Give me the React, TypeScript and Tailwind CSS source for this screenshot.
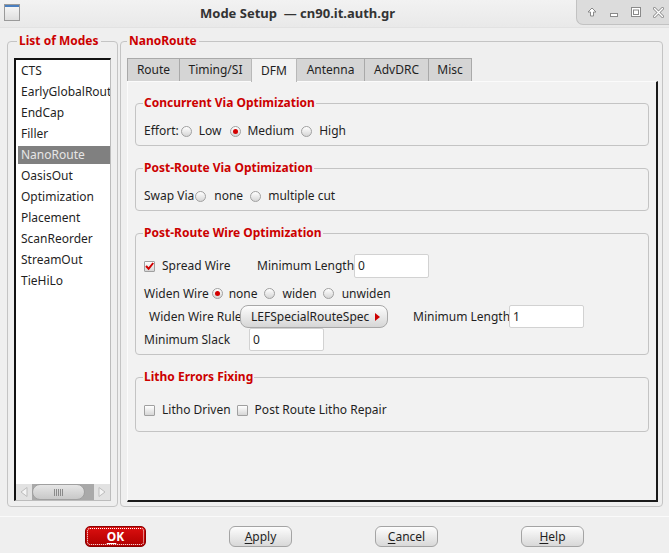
import React from "react";

const Radio = ({ checked, className = "" }: { checked?: boolean; className?: string }) => (
  <span
    className={
      "inline-flex w-[11px] h-[11px] shrink-0 items-center justify-center rounded-full border border-[#a0a0a0] bg-linear-to-b from-[#ffffff] to-[#d6d6d6] " +
      className
    }
  >
    {checked && <span className="w-[5px] h-[5px] rounded-full bg-[#d40000]" />}
  </span>
);

const Check = ({ checked, className = "" }: { checked?: boolean; className?: string }) => (
  <span
    className={
      "inline-flex w-[11px] h-[11px] shrink-0 items-center justify-center rounded-[1px] border border-[#a0a0a0] bg-linear-to-b from-[#ffffff] to-[#d6d6d6] " +
      className
    }
  >
    {checked && (
      <svg width="11" height="11" viewBox="0 0 11 11" className="shrink-0">
        <path d="M2 5 L4.6 7.8 L9.2 2" fill="none" stroke="#d00000" strokeWidth="2" />
      </svg>
    )}
  </span>
);

const Input = ({ value, w, h }: { value: string; w: string; h: string }) => (
  <div
    className={
      "flex items-center shrink-0 bg-white border border-[#d2d2d2] rounded-[2px] pl-[3px] text-[#1f1f1f] " + w + " " + h
    }
  >
    {value}
  </div>
);

const Group = ({
  title,
  className = "",
  children,
}: {
  title: string;
  className?: string;
  children: React.ReactNode;
}) => (
  <fieldset className={"border border-[#c4c4c4] rounded-[4px] pl-[8px] pr-[8px] " + className}>
    <legend className="px-[1px] ml-[-1px] text-[#cc0000] font-bold leading-[16px]">{title}</legend>
    {children}
  </fieldset>
);

const Btn = ({ children, ok }: { children: React.ReactNode; ok?: boolean }) =>
  ok ? (
    <div className="w-[61px] h-[21px] flex items-center justify-center rounded-[5px] border border-[#8a0000] bg-linear-to-b from-[#dc1010] to-[#b00000] text-white font-bold outline-1 outline-dotted outline-white outline-offset-[-3px]">
      {children}
    </div>
  ) : (
    <div className="w-[63px] h-[21px] flex items-center justify-center rounded-[6px] border border-[#a4a4a4] bg-linear-to-b from-[#fdfdfd] to-[#d8d8d8] text-[#1f1f1f]">
      {children}
    </div>
  );

const modes = [
  "CTS",
  "EarlyGlobalRoute",
  "EndCap",
  "Filler",
  "NanoRoute",
  "OasisOut",
  "Optimization",
  "Placement",
  "ScanReorder",
  "StreamOut",
  "TieHiLo",
];

const tabs: [string, string][] = [
  ["Route", "w-[53px]"],
  ["Timing/SI", "w-[73px]"],
  ["DFM", "w-[46px]"],
  ["Antenna", "w-[69px]"],
  ["AdvDRC", "w-[65px]"],
  ["Misc", "w-[44px]"],
];

export default function App() {
  return (
    <div className="w-[669px] h-[553px] overflow-hidden bg-[#efefef] text-[12px] leading-[16px] text-[#1f1f1f] font-['Noto_Sans','Open_Sans','DejaVu_Sans',sans-serif] flex flex-col">
      {/* Title bar */}
      <div className="h-[28px] shrink-0 flex items-start bg-linear-to-b from-[#f2f2f2] to-[#e9e9e9] border-b border-[#e2e2e2]">
        <div className="mt-[4px] ml-[4px] w-[16px] h-[17px] border border-[#9a9a9a] bg-linear-to-b from-[#f8f8f8] to-[#dedede] flex flex-col">
          <div className="h-[2px] bg-[#4a7fc0]" />
        </div>
        <div className="ml-[180px] mt-[5px] font-bold text-[13px] leading-[17px] text-[#333333] whitespace-pre">
          Mode Setup  — cn90.it.auth.gr
        </div>
        <div className="ml-auto h-[25px] w-[93px] bg-[#dcdcdc] border-l border-b border-[#c2c2c2] rounded-bl-[7px] flex items-center gap-[12px] pl-[10px]">
          <svg width="10" height="10" viewBox="0 0 10 10">
            <path d="M5 1 L9 5 L6.5 5 L6.5 9 L3.5 9 L3.5 5 L1 5 Z" fill="#ffffff" stroke="#8a8a8a" strokeWidth="1" />
          </svg>
          <svg width="10" height="10" viewBox="0 0 10 10">
            <rect x="1.5" y="6.5" width="7" height="3" fill="#ffffff" stroke="#8a8a8a" />
          </svg>
          <svg width="10" height="10" viewBox="0 0 10 10">
            <rect x="0.5" y="0.5" width="9" height="9" fill="#ffffff" stroke="#8a8a8a" />
            <rect x="2.5" y="3" width="5" height="4.5" fill="none" stroke="#8a8a8a" />
          </svg>
          <svg width="11" height="11" viewBox="0 0 11 11">
            <path d="M1.5 1.5 L9.5 9.5 M9.5 1.5 L1.5 9.5" stroke="#8a8a8a" strokeWidth="3" strokeLinecap="round" />
            <path d="M1.5 1.5 L9.5 9.5 M9.5 1.5 L1.5 9.5" stroke="#ffffff" strokeWidth="1.4" strokeLinecap="round" />
          </svg>
        </div>
      </div>

      {/* Main area */}
      <div className="h-[488px] shrink-0 flex pt-[5px] pl-[7px] gap-[2px]">
        {/* List of Modes */}
        <fieldset className="w-[111px] h-[474px] border border-[#c4c4c4] rounded-[4px] px-[6px] pb-[5px] flex flex-col">
          <legend className="ml-[3px] px-[2px] text-[#cc0000] font-bold leading-[16px]">List of Modes</legend>
          <div className="mt-[9px] w-[97px] flex-1 bg-white border-l-2 border-t-2 border-[#111111] border-r border-b border-r-[#bcbcbc] border-b-[#bcbcbc] flex flex-col overflow-hidden">
            <div className="flex-1 pt-[2px] pl-[2px] flex flex-col gap-[3px]">
              {modes.map((m) => (
                <div
                  key={m}
                  className={
                    "h-[18px] pl-[3px] flex items-center whitespace-nowrap overflow-hidden " +
                    (m === "NanoRoute" ? "bg-[#808080] text-[#e6e6e6]" : "text-[#1f1f1f]")
                  }
                >
                  {m}
                </div>
              ))}
            </div>
            <div className="h-[16px] flex bg-[#a9a9a9]">
              <div className="w-[16px] bg-[#e2e2e2] flex items-center justify-center">
                <svg width="8" height="10" viewBox="0 0 8 10">
                  <path d="M7 0.5 L1 5 L7 9.5 Z" fill="#f4f4f4" stroke="#bdbdbd" />
                </svg>
              </div>
              <div className="w-[53px] bg-linear-to-b from-[#e6e6e6] to-[#c8c8c8] rounded-full border border-[#a0a0a0] flex items-center justify-center gap-[1px]">
                {[0, 1, 2, 3, 4].map((i) => (
                  <div key={i} className="w-[1px] h-[7px] bg-[#8a8a8a]" />
                ))}
              </div>
              <div className="flex-1" />
              <div className="w-[16px] bg-[#e2e2e2] flex items-center justify-center">
                <svg width="8" height="10" viewBox="0 0 8 10">
                  <path d="M1 0.5 L7 5 L1 9.5 Z" fill="#f4f4f4" stroke="#bdbdbd" />
                </svg>
              </div>
            </div>
          </div>
        </fieldset>

        {/* NanoRoute */}
        <fieldset className="w-[543px] h-[474px] border border-[#c4c4c4] rounded-[4px] pl-[6px] pr-[4px] pb-[4px] flex flex-col">
          <legend className="px-[2px] text-[#cc0000] font-bold leading-[16px]">NanoRoute</legend>
          <div className="mt-[9px] flex h-[23px] shrink-0">
            {tabs.map(([t, w]) => (
              <div
                key={t}
                className={
                  w +
                  " h-[23px] flex items-center justify-center border border-[#a9a9a9] border-b-0 -ml-px first:ml-0 " +
                  (t === "DFM" ? "bg-[#f2f2f2] relative z-10 h-[24px] border-[#b8b8b8]" : "bg-[#d5d5d5]")
                }
              >
                {t}
              </div>
            ))}
          </div>
          <div className="w-[531px] flex-1 bg-[#f2f2f2] border-l border-t border-[#fbfbfb] border-r-2 border-b-2 border-r-[#1a1a1a] border-b-[#1a1a1a] pl-[7px] pr-[7px] pt-[13px] flex flex-col">
            <Group title="Concurrent Via Optimization" className="pb-[4px]">
              <div className="mt-[10px] h-[20px] flex items-center">
                <span>Effort:</span>
                <Radio className="ml-[2px]" />
                <span className="ml-[7px]">Low</span>
                <Radio checked className="ml-[9px]" />
                <span className="ml-[6px]">Medium</span>
                <Radio className="ml-[7px]" />
                <span className="ml-[7px]">High</span>
              </div>
            </Group>

            <Group title="Post-Route Via Optimization" className="mt-[14px] pb-[4px]">
              <div className="mt-[10px] h-[20px] flex items-center">
                <span>Swap Via</span>
                <Radio className="ml-[1px]" />
                <span className="ml-[8px]">none</span>
                <Radio className="ml-[7px]" />
                <span className="ml-[7px]">multiple cut</span>
              </div>
            </Group>

            <Group title="Post-Route Wire Optimization" className="mt-[14px] pb-[3px]">
              <div className="mt-[13px] h-[24px] flex items-center">
                <div className="w-[113px] flex items-center">
                  <Check checked />
                  <span className="ml-[7px]">Spread Wire</span>
                </div>
                <span className="w-[97px] whitespace-nowrap">Minimum Length</span>
                <Input value="0" w="w-[75px]" h="h-[24px]" />
              </div>
              <div className="mt-[4px] h-[23px] flex items-center">
                <span>Widen Wire</span>
                <Radio checked className="ml-[3px]" />
                <span className="ml-[6px]">none</span>
                <Radio className="ml-[6px]" />
                <span className="ml-[8px]">widen</span>
                <Radio className="ml-[6px]" />
                <span className="ml-[8px]">unwiden</span>
              </div>
              <div className="h-[23px] flex items-center">
                <span className="ml-[5px] w-[91px] whitespace-nowrap">Widen Wire Rule</span>
                <div className="w-[148px] h-[23px] flex items-center rounded-[8px] border border-[#a8a8a8] bg-linear-to-b from-[#fdfdfd] to-[#d6d6d6] pl-[10px] pr-[7px]">
                  <span className="flex-1 whitespace-nowrap">LEFSpecialRouteSpec</span>
                  <svg width="5" height="8" viewBox="0 0 5 8">
                    <path d="M0 0 L5 4 L0 8 Z" fill="#cc0000" />
                  </svg>
                </div>
                <span className="ml-[25px] w-[96px] whitespace-nowrap">Minimum Length</span>
                <Input value="1" w="w-[75px]" h="h-[23px]" />
              </div>
              <div className="h-[23px] flex items-center">
                <span className="w-[105px]">Minimum Slack</span>
                <Input value="0" w="w-[75px]" h="h-[23px]" />
              </div>
            </Group>

            <Group title="Litho Errors Fixing" className="mt-[14px] pb-[12px]">
              <div className="mt-[16px] h-[18px] flex items-center">
                <Check />
                <span className="ml-[7px]">Litho Driven</span>
                <Check className="ml-[6px]" />
                <span className="ml-[7px]">Post Route Litho Repair</span>
              </div>
            </Group>
          </div>
        </fieldset>
      </div>

      {/* Bottom buttons */}
      <div className="flex-1 border-t border-[#fafafa] pt-[9px] pl-[85px] flex gap-[83px]">
        <Btn ok>
          <span className="underline underline-offset-2">O</span>K
        </Btn>
        <Btn>
          <span className="underline underline-offset-2">A</span>pply
        </Btn>
        <Btn>
          <span className="underline underline-offset-2">C</span>ancel
        </Btn>
        <Btn>
          <span className="underline underline-offset-2">H</span>elp
        </Btn>
      </div>
    </div>
  );
}
